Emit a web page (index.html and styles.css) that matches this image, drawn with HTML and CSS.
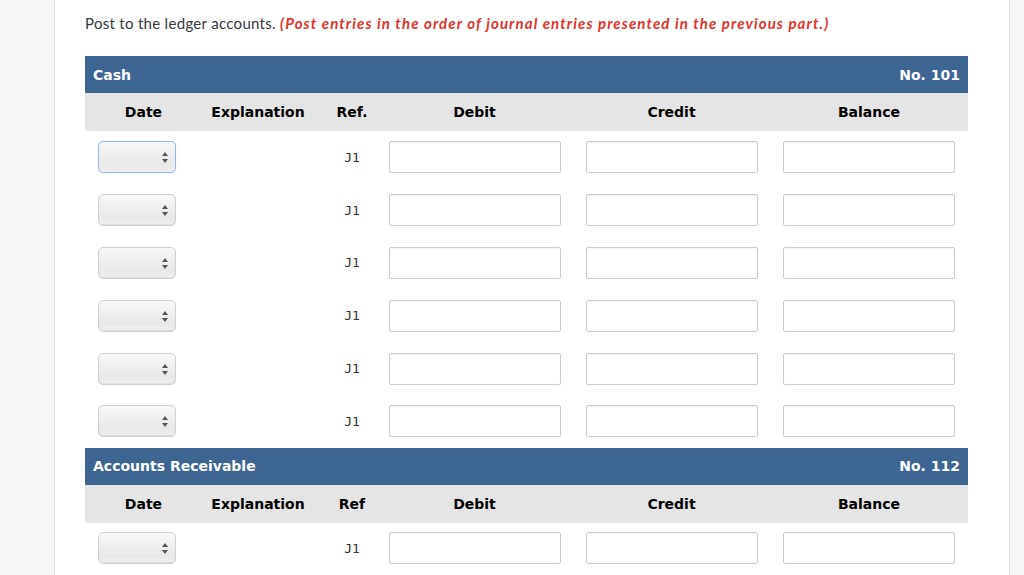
FILE: index.html
```html
<!DOCTYPE html>
<html>
<head>
<meta charset="utf-8">
<link rel="stylesheet" href="styles.css">
</head>
<body>
<div class="page">
  <p class="prompt">Post to the ledger accounts. <em class="note">(Post entries in the order of journal entries presented in the previous part.)</em></p>

  <div class="ledger">
    <div class="acct-bar"><span>Cash</span><span>No. 101</span></div>
    <div class="grid head">
      <div class="c-date">Date</div>
      <div class="c-expl">Explanation</div>
      <div class="c-ref">Ref.</div>
      <div class="c-num">Debit</div>
      <div class="c-num">Credit</div>
      <div class="c-num">Balance</div>
    </div>
    <div class="grid row">
      <div class="c-date"><div class="sel focus"><span class="arrows"></span></div></div>
      <div class="c-expl"></div>
      <div class="c-ref ref">J1</div>
      <div class="c-num"><div class="inp"></div></div>
      <div class="c-num"><div class="inp"></div></div>
      <div class="c-num"><div class="inp"></div></div>
    </div>
    <div class="grid row">
      <div class="c-date"><div class="sel"><span class="arrows"></span></div></div>
      <div class="c-expl"></div>
      <div class="c-ref ref">J1</div>
      <div class="c-num"><div class="inp"></div></div>
      <div class="c-num"><div class="inp"></div></div>
      <div class="c-num"><div class="inp"></div></div>
    </div>
    <div class="grid row">
      <div class="c-date"><div class="sel"><span class="arrows"></span></div></div>
      <div class="c-expl"></div>
      <div class="c-ref ref">J1</div>
      <div class="c-num"><div class="inp"></div></div>
      <div class="c-num"><div class="inp"></div></div>
      <div class="c-num"><div class="inp"></div></div>
    </div>
    <div class="grid row">
      <div class="c-date"><div class="sel"><span class="arrows"></span></div></div>
      <div class="c-expl"></div>
      <div class="c-ref ref">J1</div>
      <div class="c-num"><div class="inp"></div></div>
      <div class="c-num"><div class="inp"></div></div>
      <div class="c-num"><div class="inp"></div></div>
    </div>
    <div class="grid row">
      <div class="c-date"><div class="sel"><span class="arrows"></span></div></div>
      <div class="c-expl"></div>
      <div class="c-ref ref">J1</div>
      <div class="c-num"><div class="inp"></div></div>
      <div class="c-num"><div class="inp"></div></div>
      <div class="c-num"><div class="inp"></div></div>
    </div>
    <div class="grid row">
      <div class="c-date"><div class="sel"><span class="arrows"></span></div></div>
      <div class="c-expl"></div>
      <div class="c-ref ref">J1</div>
      <div class="c-num"><div class="inp"></div></div>
      <div class="c-num"><div class="inp"></div></div>
      <div class="c-num"><div class="inp"></div></div>
    </div>

    <div class="acct-bar"><span>Accounts Receivable</span><span>No. 112</span></div>
    <div class="grid head">
      <div class="c-date">Date</div>
      <div class="c-expl">Explanation</div>
      <div class="c-ref">Ref</div>
      <div class="c-num">Debit</div>
      <div class="c-num">Credit</div>
      <div class="c-num">Balance</div>
    </div>
    <div class="grid row last">
      <div class="c-date"><div class="sel"><span class="arrows"></span></div></div>
      <div class="c-expl"></div>
      <div class="c-ref ref">J1</div>
      <div class="c-num"><div class="inp"></div></div>
      <div class="c-num"><div class="inp"></div></div>
      <div class="c-num"><div class="inp"></div></div>
    </div>
  </div>
</div>
</body>
</html>
```

FILE: styles.css
```css
html, body {
  margin: 0;
  padding: 0;
  background: #f7f7f7;
  height: 575px;
  overflow: hidden;
}

.page {
  margin-left: 54px;
  width: 956px;
  height: 575px;
  background: #ffffff;
  border-left: 1px solid #e0e0e0;
  border-right: 1px solid #e0e0e0;
  padding: 13px 0 0 30px;
  box-sizing: border-box;
  overflow: hidden;
}

.prompt {
  margin: 0;
  font-family: Lato, "Open Sans", sans-serif;
  font-size: 15px;
  line-height: 20px;
  letter-spacing: 0.3px;
  color: #333a40;
}

.note {
  color: #e5322d;
  font-weight: bold;
  font-style: italic;
  letter-spacing: 1.1px;
}

.ledger {
  margin-top: 23px;
  width: 883px;
  font-family: "DejaVu Sans", Verdana, sans-serif;
}

.acct-bar {
  display: flex;
  justify-content: space-between;
  align-items: center;
  height: 37px;
  padding: 0 8px;
  background: #3d6591;
  color: #ffffff;
  font-weight: bold;
  font-size: 14px;
}

.grid {
  display: grid;
  grid-template-columns: 117px 112px 62px 197px 197px 198px;
  align-items: center;
}

.head {
  height: 38px;
  background: #e5e5e5;
  color: #000000;
  font-weight: bold;
  font-size: 14px;
  text-align: center;
}

.row {
  height: 52.8px;
}

.row.last {
  height: 51px;
}

.c-date {
  text-align: center;
}

.row .c-date {
  padding-left: 13px;
}

.c-ref {
  padding-left: 14px;
  text-align: center;
}

.c-num {
  display: flex;
  justify-content: center;
}

.head .c-num {
  display: block;
}

.ref {
  font-family: "DejaVu Sans Mono", monospace;
  font-size: 13px;
  color: #333333;
}

.sel {
  position: relative;
  width: 78px;
  height: 32px;
  box-sizing: border-box;
  border: 1px solid #d0d0d0;
  border-radius: 5px;
  background: linear-gradient(#f8f8f8, #e8e8e8 75%, #f0f0f0);
  box-shadow: inset 0 -1px 1px rgba(0,0,0,0.08);
}

.sel.focus {
  border-color: #8db8e8;
  box-shadow: 0 0 1px #a9cbf0;
}

.arrows {
  position: absolute;
  right: 7px;
  top: 10px;
  width: 6px;
  height: 11px;
}

.arrows::before,
.arrows::after {
  content: "";
  position: absolute;
  left: 0;
  border-left: 3px solid transparent;
  border-right: 3px solid transparent;
}

.arrows::before {
  top: 0;
  border-bottom: 4.5px solid #555555;
}

.arrows::after {
  bottom: 0;
  border-top: 4.5px solid #555555;
}

.inp {
  width: 172px;
  height: 32px;
  box-sizing: border-box;
  border: 1px solid #cccccc;
  border-radius: 2px;
  background: #ffffff;
  box-shadow: inset 0 1px 1px rgba(0,0,0,0.04);
}
```
